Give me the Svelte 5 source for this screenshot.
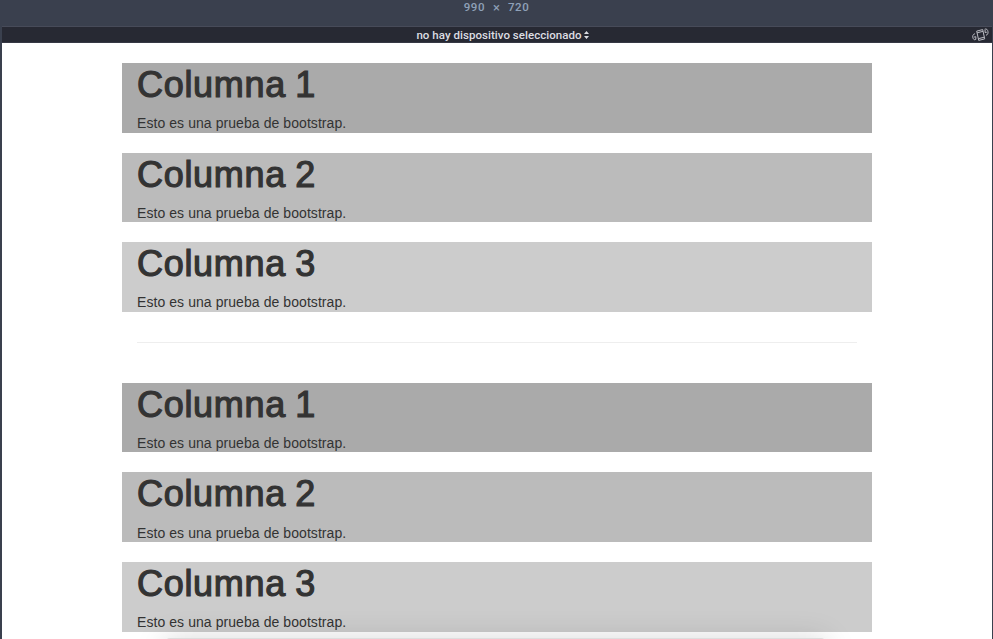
<script>
  const columns = [1, 2, 3];
  const groups = ['first', 'second'];
</script>

<div class="viewer">
  <header class="size"><span>990</span><span class="times">×</span><span>720</span></header>
  <div class="toolbar">
    <span class="device">no hay dispositivo seleccionado</span>
    <svg class="arrows" width="5" height="8" viewBox="0 0 5 8"><path d="M0 3 2.5 0 5 3zM0 5h5L2.5 8z" fill="#dcdde2" /></svg>
    <svg class="rotate" width="17" height="14" viewBox="0 0 17 14" fill="none" stroke="#b9bac1" stroke-width="1">
      <path d="m4.7 3.1 6-1.5 2 9.3-6 1.5zM5.1 4.8l6-1.5M6.3 10.7l6-1.5" />
      <path d="M3 5.7C.7 6.2.2 8.5 1.2 10.5c.5 1.2 1.6 1.6 2.6.9V8.7L2 9.1M12.6 1.3c1.8-1 3.2.4 3.4 2.5.2 1.9-.4 3.1-2 3.4M13.1 2v2.6l1.7-.4" />
    </svg>
  </div>
  <main>
    <div class="container">
      {#each groups as group, index}
        {#if index > 0}<hr />{/if}
        <section class={group}>
          {#each columns as column}
            <article class="column shade{column}">
              <h1>Columna {column}</h1>
              <p>Esto es una prueba de bootstrap.</p>
            </article>
          {/each}
        </section>
      {/each}
    </div>
  </main>
  <div class="dock"></div>
</div>

<style>
  :global(body) { margin: 0; overflow: hidden; }
  .viewer {
    position: relative;
    box-sizing: border-box;
    width: 993px;
    height: 639px;
    overflow: hidden;
    display: flex;
    flex-direction: column;
    background: #3a404e;
    font-family: "Liberation Sans", Arial, sans-serif;
  }
  .size {
    flex: none;
    height: 26px;
    box-sizing: border-box;
    display: flex;
    justify-content: center;
    gap: 8px;
    font: 500 11.5px/15px Roboto, sans-serif;
    letter-spacing: .55px;
    color: #8fa1b8;
  }
  .times { font-size: 13px; font-weight: 400; letter-spacing: 0; }
  .toolbar {
    position: relative;
    flex: none;
    height: 17px;
    margin: 0 1px 0 2px;
    box-sizing: border-box;
    border-top: 1px solid #474b59;
    border-bottom: 1px solid #363844;
    display: flex;
    align-items: center;
    justify-content: center;
    gap: 2px;
    padding-left: 11px;
    background: #272933;
    color: #dcdde2;
    font: 500 11.5px/15px Roboto, sans-serif;
  }
  .device { letter-spacing: .04px; white-space: nowrap; padding-top: 1px; }
  .rotate { position: absolute; right: 3px; top: 1px; }
  main { flex: 1; min-height: 0; margin: 0 1px 0 2px; background: #fff; }
  .container { box-sizing: border-box; width: 750px; margin-left: 120px; padding-top: 20px; }
  section { display: flex; flex-direction: column; gap: 20px; }
  .column { box-sizing: border-box; height: 69.6px; padding: 2px 15px 0; color: #333; }
  .shade1 { background: #aaa; }
  .shade2 { background: #bbb; }
  .shade3 { background: #ccc; }
  h1 {
    margin: 0 0 8.7px;
    font-size: 36px;
    font-weight: 400;
    line-height: 39.6px;
    letter-spacing: .7px;
    word-spacing: -1.5px;
    -webkit-text-stroke: 1.2px #333;
  }
  p { margin: 0; font-size: 14px; line-height: 20px; letter-spacing: .07px; }
  hr { height: 0; margin: 30px 15px 40px; border: 0; border-top: 1px solid #eee; }
  .dock {
    position: absolute;
    left: 165px;
    top: 638px;
    width: 661px;
    height: 50px;
    border-radius: 5px 5px 0 0;
    background: #dedede;
    box-shadow: 0 2px 30px rgba(0, 0, 0, .17);
  }
</style>
